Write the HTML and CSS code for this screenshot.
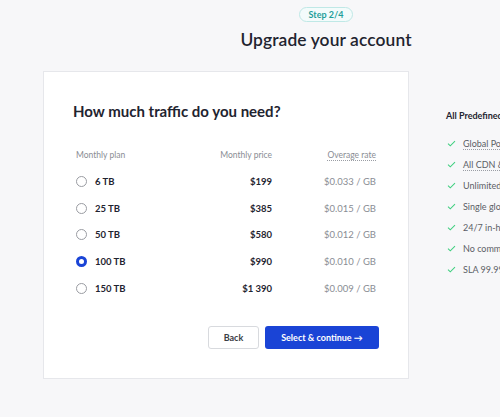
FILE: index.html
```html
<!DOCTYPE html>
<html lang="en">
<head>
    <meta charset="UTF-8">
    <meta name="viewport" content="width=device-width, initial-scale=1.0">
    <title>Upgrade your account</title>
    <link rel="stylesheet" href="styles.css">
</head>
<body>

<div class="page">
    <div class="page-header">
        <span class="step-badge">Step 2/4</span>
        <h1 class="page-title">Upgrade your account</h1>
    </div>

    <div class="layout">
        <div class="card">
            <h2 class="card-title">How much traffic do you need?</h2>

            <div class="plans">
                <div class="plan-row plan-head">
                    <span>Monthly plan</span>
                    <span class="num">Monthly price</span>
                    <span class="num"><span class="hint">Overage rate</span></span>
                </div>
                <label class="plan-row">
                    <span class="plan-name"><span class="radio"></span>6 TB</span>
                    <span class="num price">$199</span>
                    <span class="num rate">$0.033 / GB</span>
                </label>
                <label class="plan-row">
                    <span class="plan-name"><span class="radio"></span>25 TB</span>
                    <span class="num price">$385</span>
                    <span class="num rate">$0.015 / GB</span>
                </label>
                <label class="plan-row">
                    <span class="plan-name"><span class="radio"></span>50 TB</span>
                    <span class="num price">$580</span>
                    <span class="num rate">$0.012 / GB</span>
                </label>
                <label class="plan-row">
                    <span class="plan-name"><span class="radio checked"></span>100 TB</span>
                    <span class="num price">$990</span>
                    <span class="num rate">$0.010 / GB</span>
                </label>
                <label class="plan-row">
                    <span class="plan-name"><span class="radio"></span>150 TB</span>
                    <span class="num price">$1 390</span>
                    <span class="num rate">$0.009 / GB</span>
                </label>
            </div>

            <div class="actions">
                <button class="btn btn-back">Back</button>
                <button class="btn btn-primary">Select &amp; continue &rarr;</button>
            </div>
        </div>

        <div class="features">
            <h3 class="features-title">All Predefined plans include</h3>
            <ul class="feature-list">
                <li><svg class="check" viewBox="0 0 10 8"><path d="M1 4.2 L3.6 6.6 L9 1.2"/></svg><span class="hint">Global PoP network</span></li>
                <li><svg class="check" viewBox="0 0 10 8"><path d="M1 4.2 L3.6 6.6 L9 1.2"/></svg><span class="hint">All CDN &amp; security features</span></li>
                <li><svg class="check" viewBox="0 0 10 8"><path d="M1 4.2 L3.6 6.6 L9 1.2"/></svg>Unlimited requests</li>
                <li><svg class="check" viewBox="0 0 10 8"><path d="M1 4.2 L3.6 6.6 L9 1.2"/></svg>Single global price</li>
                <li><svg class="check" viewBox="0 0 10 8"><path d="M1 4.2 L3.6 6.6 L9 1.2"/></svg>24/7 in-house support</li>
                <li><svg class="check" viewBox="0 0 10 8"><path d="M1 4.2 L3.6 6.6 L9 1.2"/></svg>No commitment</li>
                <li><svg class="check" viewBox="0 0 10 8"><path d="M1 4.2 L3.6 6.6 L9 1.2"/></svg>SLA 99.99% uptime</li>
            </ul>
        </div>
    </div>
</div>

</body>
</html>
```

FILE: styles.css
```css
html, body {
    margin: 0;
    height: 100%;
    overflow: hidden;
}

body {
    font-family: 'Lato', 'Open Sans', sans-serif;
    background-color: #f7f7f9;
    color: #1f2430;
}

.page {
    width: 566px;
    margin-left: 43px;
    padding-top: 7px;
}

.page-header {
    display: flex;
    flex-direction: column;
    align-items: center;
}

.step-badge {
    font-size: 9px;
    font-weight: 700;
    color: #1f9e9a;
    border: 1px solid #bfe8e6;
    background-color: #f3fbfb;
    border-radius: 8px;
    padding: 0 9px;
    height: 13px;
    line-height: 13px;
}

.page-title {
    margin: 7px 0 0;
    font-size: 17.4px;
    font-weight: 600;
    line-height: 22px;
    letter-spacing: 0.1px;
}

.layout {
    display: flex;
    gap: 37px;
    margin-top: 20px;
}

/* Card */
.card {
    width: 306px;
    flex-shrink: 0;
    background-color: #fff;
    border: 1px solid #e6e7eb;
    padding: 29px;
}

.card-title {
    margin: 0 0 21px;
    font-size: 15px;
    font-weight: 700;
    line-height: 20px;
}

.plans {
    padding: 0 3px;
}

.plan-row {
    display: grid;
    grid-template-columns: 1fr 90px 104px;
    align-items: center;
    height: 26.7px;
    font-size: 9.5px;
}

.plan-head {
    color: #8a8d94;
    font-size: 8.5px;
    height: 26px;
}

.num {
    text-align: right;
}

.hint {
    text-decoration: underline dotted #9a9da4;
    text-underline-offset: 2px;
}

.plan-name {
    display: flex;
    align-items: center;
    font-weight: 700;
    color: #1f2430;
}

.radio {
    width: 9px;
    height: 9px;
    border: 1px solid #9a9ca2;
    border-radius: 50%;
    margin-right: 8px;
    background-color: #fff;
}

.radio.checked {
    width: 5px;
    height: 5px;
    border: 3px solid #1a44d6;
}

.price {
    font-weight: 700;
}

.rate {
    color: #8a8d94;
}

.actions {
    display: flex;
    justify-content: flex-end;
    gap: 6px;
    margin-top: 25px;
}

.btn {
    font-family: inherit;
    font-size: 9px;
    font-weight: 700;
    height: 23px;
    border-radius: 3px;
    cursor: pointer;
}

.btn-back {
    width: 51px;
    background-color: #fff;
    color: #3a3d44;
    border: 1px solid #d8dade;
}

.btn-primary {
    width: 114px;
    background-color: #1a44d6;
    color: #fff;
    border: none;
}

/* Sidebar */
.features {
    width: 163px;
    flex-shrink: 0;
    padding-top: 39px;
}

.features-title {
    margin: 0 0 11px;
    font-size: 9px;
    font-weight: 700;
    line-height: 12px;
}

.feature-list {
    list-style: none;
    margin: 0;
    padding: 0;
}

.feature-list li {
    display: flex;
    align-items: center;
    height: 21px;
    font-size: 9px;
    color: #5b5e66;
    white-space: nowrap;
}

.check {
    width: 9px;
    height: 7px;
    margin: 0 7px 0 1px;
    fill: none;
    stroke: #3fcf7f;
    stroke-width: 1.2;
}
```
